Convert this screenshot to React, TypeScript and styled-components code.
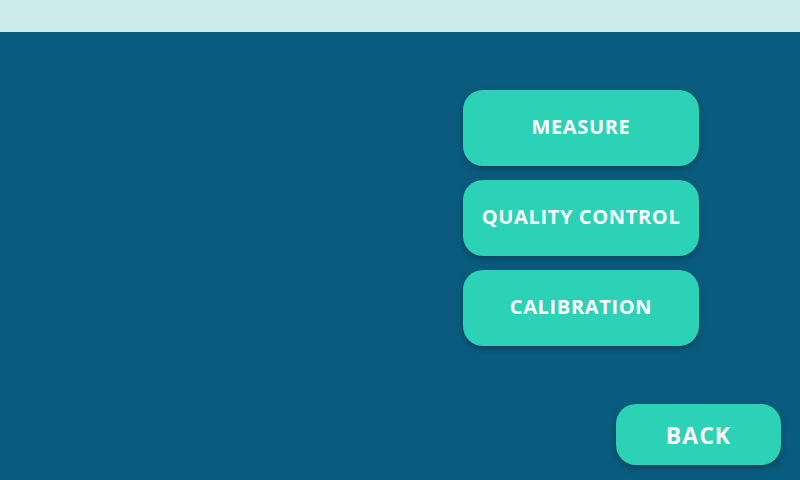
import React from "react";
import styled, { createGlobalStyle } from "styled-components";

const Global = createGlobalStyle`
  html, body { margin: 0; padding: 0; }
  body { background: #0a5c7e; font-family: "Open Sans", "Lato", sans-serif; }
  * { box-sizing: border-box; }
`;

const Screen = styled.div`
  width: 800px;
  height: 480px;
  display: flex;
  flex-direction: column;
  background: #0a5c7e;
  overflow: hidden;
`;

const Header = styled.header`
  height: 32px;
  flex: 0 0 32px;
  background: #cdebed;
`;

const Main = styled.main`
  flex: 1;
  display: flex;
  flex-direction: column;
  padding: 58px 19px 15px 20px;
`;

const Menu = styled.nav`
  align-self: flex-end;
  margin-right: 82px;
  display: flex;
  flex-direction: column;
  gap: 14px;
`;

const Footer = styled.div`
  margin-top: auto;
  display: flex;
  justify-content: flex-end;
`;

const Button = styled.button<{ $w: number; $h: number; $size: number; $ls: number; $pb: number }>`
  width: ${(p) => p.$w}px;
  height: ${(p) => p.$h}px;
  border: none;
  border-radius: 20px;
  background: #2bd2b6;
  color: #ffffff;
  font-family: "Open Sans", "Lato", sans-serif;
  font-weight: 700;
  font-size: ${(p) => p.$size}px;
  letter-spacing: ${(p) => p.$ls}px;
  box-shadow: 0 3px 6px rgba(0, 20, 40, 0.35);
  cursor: pointer;
  padding: 0 0 ${(p) => p.$pb}px 0;
  white-space: nowrap;
`;

export default function App() {
  return (
    <>
      <Global />
      <Screen>
        <Header />
        <Main>
          <Menu>
            <Button $w={236} $h={76} $size={20} $ls={0.65} $pb={3}>MEASURE</Button>
            <Button $w={236} $h={76} $size={20} $ls={0.65} $pb={3}>QUALITY CONTROL</Button>
            <Button $w={236} $h={76} $size={20} $ls={0.65} $pb={3}>CALIBRATION</Button>
          </Menu>
          <Footer>
            <Button $w={165} $h={61} $size={23} $ls={1} $pb={0}>BACK</Button>
          </Footer>
        </Main>
      </Screen>
    </>
  );
}
